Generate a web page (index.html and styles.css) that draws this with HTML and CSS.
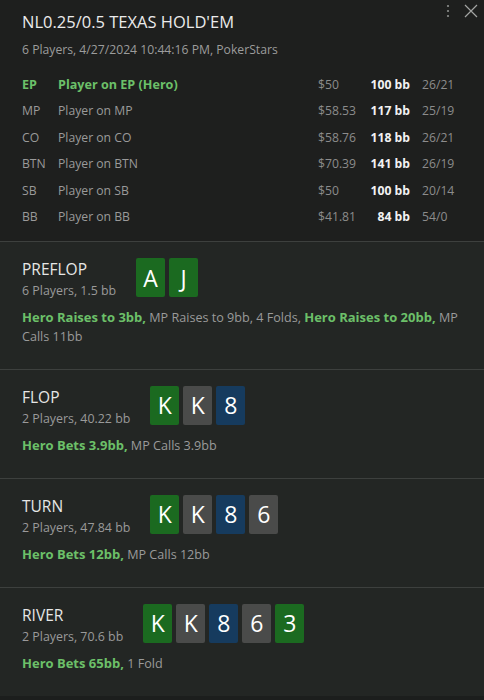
FILE: index.html
```html
<!DOCTYPE html>
<html lang="en">
<head>
<meta charset="utf-8">
<title>Hand history</title>
<link rel="stylesheet" href="styles.css">
</head>
<body>
<div class="panel">
  <header class="head">
    <div class="head-icons">
      <svg class="icon-dots" width="6" height="16" viewBox="0 0 6 16"><circle cx="3" cy="3" r="1.1"/><circle cx="3" cy="8" r="1.1"/><circle cx="3" cy="13" r="1.1"/></svg>
      <svg class="icon-close" width="16" height="16" viewBox="0 0 16 16"><path d="M2 2 L14 14 M14 2 L2 14"/></svg>
    </div>
    <h1 class="title">NL0.25/0.5 TEXAS HOLD'EM</h1>
    <p class="meta">6 Players, 4/27/2024 10:44:16 PM, PokerStars</p>
    <div class="players">
      <div class="row hero"><span class="pos">EP</span><span class="name">Player on EP (Hero)</span><span class="stack">$50</span><span class="bb">100 bb</span><span class="ratio">26/21</span></div>
      <div class="row"><span class="pos">MP</span><span class="name">Player on MP</span><span class="stack">$58.53</span><span class="bb">117 bb</span><span class="ratio">25/19</span></div>
      <div class="row"><span class="pos">CO</span><span class="name">Player on CO</span><span class="stack">$58.76</span><span class="bb">118 bb</span><span class="ratio">26/21</span></div>
      <div class="row"><span class="pos">BTN</span><span class="name">Player on BTN</span><span class="stack">$70.39</span><span class="bb">141 bb</span><span class="ratio">26/19</span></div>
      <div class="row"><span class="pos">SB</span><span class="name">Player on SB</span><span class="stack">$50</span><span class="bb">100 bb</span><span class="ratio">20/14</span></div>
      <div class="row"><span class="pos">BB</span><span class="name">Player on BB</span><span class="stack">$41.81</span><span class="bb">84 bb</span><span class="ratio">54/0</span></div>
    </div>
  </header>

  <section class="street">
    <div class="street-top">
      <div class="street-info">
        <div class="street-name">PREFLOP</div>
        <div class="street-sub">6 Players, 1.5 bb</div>
      </div>
      <div class="cards">
        <span class="card green">A</span><span class="card green">J</span>
      </div>
    </div>
    <p class="actions"><b>Hero Raises to 3bb,</b> MP Raises to 9bb, 4 Folds, <b>Hero Raises to 20bb,</b> MP Calls 11bb</p>
  </section>

  <section class="street">
    <div class="street-top">
      <div class="street-info">
        <div class="street-name">FLOP</div>
        <div class="street-sub">2 Players, 40.22 bb</div>
      </div>
      <div class="cards">
        <span class="card green">K</span><span class="card grey">K</span><span class="card blue">8</span>
      </div>
    </div>
    <p class="actions"><b>Hero Bets 3.9bb,</b> MP Calls 3.9bb</p>
  </section>

  <section class="street">
    <div class="street-top">
      <div class="street-info">
        <div class="street-name">TURN</div>
        <div class="street-sub">2 Players, 47.84 bb</div>
      </div>
      <div class="cards">
        <span class="card green">K</span><span class="card grey">K</span><span class="card blue">8</span><span class="card grey">6</span>
      </div>
    </div>
    <p class="actions"><b>Hero Bets 12bb,</b> MP Calls 12bb</p>
  </section>

  <section class="street">
    <div class="street-top">
      <div class="street-info">
        <div class="street-name">RIVER</div>
        <div class="street-sub">2 Players, 70.6 bb</div>
      </div>
      <div class="cards">
        <span class="card green">K</span><span class="card grey">K</span><span class="card blue">8</span><span class="card grey">6</span><span class="card green">3</span>
      </div>
    </div>
    <p class="actions"><b>Hero Bets 65bb,</b> 1 Fold</p>
  </section>
</div>
</body>
</html>
```
FILE: styles.css
```css
html, body {
  margin: 0;
  padding: 0;
  background: #1c1e1d;
}
body {
  font-family: "Open Sans", "Noto Sans", sans-serif;
  color: #a3a3a3;
  width: 484px;
  height: 700px;
  overflow: hidden;
}
.panel {
  width: 484px;
}
.head {
  position: relative;
  background: #1e1f1e;
  padding: 10px 22px 11px 22px;
}
.head-icons {
  position: absolute;
  top: 3px;
  right: 5px;
  display: flex;
  align-items: center;
  gap: 12px;
}
.icon-dots circle { fill: #8d8f8d; }
.icon-close path { stroke: #a3a5a3; stroke-width: 1.2; fill: none; }
.title {
  margin: 0;
  font-size: 16.5px;
  font-weight: 400;
  line-height: 24px;
  color: #ebebeb;
}
.meta {
  margin: 7px 0 0 0;
  font-size: 12.2px;
  line-height: 18px;
  color: #9c9c9c;
}
.players {
  margin-top: 13px;
  display: grid;
  grid-template-columns: 36px 1fr 52px 40px 52px;
}
.row {
  display: contents;
}
.row span {
  font-size: 12.2px;
  line-height: 26.4px;
  white-space: nowrap;
  color: #9a9a9a;
}
.row .stack, .row .ratio { color: #8c8c8c; }
.row .bb {
  text-align: right;
  font-weight: 700;
  color: #f2f2f2;
}
.row .ratio { padding-left: 12px; }
.row.hero .pos, .row.hero .name {
  color: #6cc069;
  font-weight: 700;
  font-size: 12.6px;
}
.street {
  background: #232624;
  border-top: 1px solid #3d403e;
  padding: 16px 22px 22.5px 22px;
}
.street-top {
  display: flex;
  align-items: flex-start;
  gap: 20px;
  min-height: 43px;
}
.street-name {
  font-size: 15.5px;
  line-height: 22px;
  color: #e6e6e6;
}
.street-sub {
  font-size: 12.4px;
  line-height: 21px;
  color: #9a9a9a;
}
.cards {
  display: flex;
  gap: 4px;
}
.card {
  width: 29px;
  height: 39px;
  border-radius: 2px;
  display: flex;
  align-items: center;
  justify-content: center;
  font-size: 23px;
  color: #ffffff;
}
.card.green { background: #1b6a20; }
.card.grey { background: #4a4b4a; }
.card.blue { background: #163b5e; }
.actions {
  margin: 8px 0 0 0;
  font-size: 12.6px;
  line-height: 18.5px;
  color: #9a9a9a;
}
.actions b {
  color: #6cc069;
  font-weight: 700;
  font-size: 13px;
  line-height: 1;
}
```
